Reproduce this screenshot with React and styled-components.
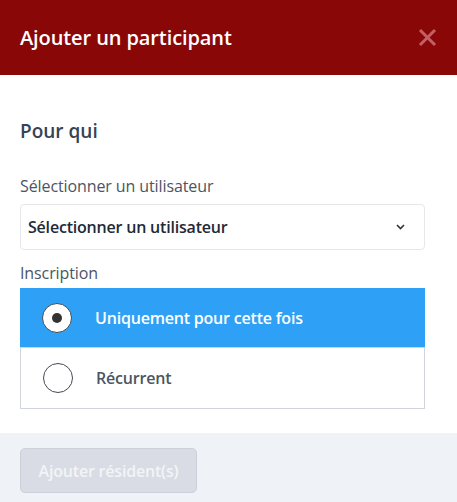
import React from "react";
import styled, { createGlobalStyle } from "styled-components";

const Global = createGlobalStyle`
  html, body { margin: 0; padding: 0; background: #ffffff; }
  body { font-family: "Open Sans", "Noto Sans", sans-serif; }
  * { box-sizing: border-box; }
`;

const Modal = styled.div`
  width: 457px;
  height: 502px;
  display: flex;
  flex-direction: column;
  background: #ffffff;
`;

const Header = styled.header`
  height: 75px;
  background: #8a0708;
  display: flex;
  align-items: center;
  justify-content: space-between;
  padding: 0 20px;
`;

const Title = styled.h1`
  margin: 0;
  color: #ffffff;
  font-size: 20px;
  font-weight: 600;
  letter-spacing: -0.1px;
`;

const CloseButton = styled.button`
  border: 0;
  background: none;
  padding: 0;
  width: 19px;
  height: 19px;
  display: flex;
  cursor: pointer;
`;

const Body = styled.div`
  flex: 1;
  padding: 44px 32px 0 20px;
  display: flex;
  flex-direction: column;
`;

const SectionTitle = styled.h2`
  margin: 0 0 33px;
  font-size: 19px;
  font-weight: 600;
  color: #374254;
  line-height: 24px;
`;

const FieldLabel = styled.div`
  font-size: 16px;
  color: #4b5563;
  line-height: 20px;
  letter-spacing: -0.1px;
  margin-bottom: ${(p) => p.$mb || 8}px;
`;

const Select = styled.div`
  height: 46px;
  border: 1px solid #e5e7eb;
  border-radius: 4px;
  display: flex;
  align-items: center;
  justify-content: space-between;
  padding: 0 19px 0 7px;
  font-size: 16px;
  font-weight: 600;
  letter-spacing: -0.2px;
  color: #1f2937;
  margin-bottom: 13px;
`;

const OptionList = styled.div`
  border: 1px solid #d1d5db;
  display: flex;
  flex-direction: column;
`;

const Option = styled.div`
  height: 60px;
  display: flex;
  align-items: center;
  padding-left: 22px;
  gap: 23px;
  background: ${(p) => (p.$selected ? "#2ea1f7" : "#ffffff")};
  color: ${(p) => (p.$selected ? "#ffffff" : "#4b5563")};
  font-size: 16px;
  font-weight: 600;
  letter-spacing: -0.2px;
  margin: ${(p) => (p.$selected ? "-1px -1px 0" : "0")};
  border-bottom: ${(p) => (p.$selected ? "1px solid #d1d5db" : "0")};
`;

const Radio = styled.span`
  width: 30px;
  height: 30px;
  border-radius: 50%;
  border: 1px solid #444a52;
  background: #ffffff;
  display: flex;
  align-items: center;
  justify-content: center;
  flex-shrink: 0;
`;

const Dot = styled.span`
  width: 10px;
  height: 10px;
  border-radius: 50%;
  background: #333333;
`;

const Footer = styled.footer`
  height: 69px;
  background: #eff2f7;
  padding: 15px 20px 9px;
  display: flex;
  align-items: flex-start;
`;

const SubmitButton = styled.button`
  height: 45px;
  width: 177px;
  border: 1px solid #ccd0da;
  border-radius: 5px;
  background: #d9dce5;
  color: #f3f4f7;
  font-family: inherit;
  font-size: 16px;
  font-weight: 600;
  letter-spacing: -0.2px;
`;

export default function App() {
  return (
    <>
      <Global />
      <Modal>
        <Header>
          <Title>Ajouter un participant</Title>
          <CloseButton aria-label="Fermer">
            <svg width="19" height="19" viewBox="0 0 19 19">
              <path d="M2 2L17 17M17 2L2 17" stroke="#c45f64" strokeWidth="3" strokeLinecap="butt" />
            </svg>
          </CloseButton>
        </Header>
        <Body>
          <SectionTitle>Pour qui</SectionTitle>
          <FieldLabel>Sélectionner un utilisateur</FieldLabel>
          <Select>
            <span>Sélectionner un utilisateur</span>
            <svg width="9" height="6" viewBox="0 0 9 6">
              <path d="M1 1L4.5 4.5L8 1" stroke="#333" strokeWidth="1.6" fill="none" />
            </svg>
          </Select>
          <FieldLabel $mb={5}>Inscription</FieldLabel>
          <OptionList>
            <Option $selected>
              <Radio><Dot /></Radio>
              Uniquement pour cette fois
            </Option>
            <Option>
              <Radio />
              Récurrent
            </Option>
          </OptionList>
        </Body>
        <Footer>
          <SubmitButton disabled>Ajouter résident(s)</SubmitButton>
        </Footer>
      </Modal>
    </>
  );
}
